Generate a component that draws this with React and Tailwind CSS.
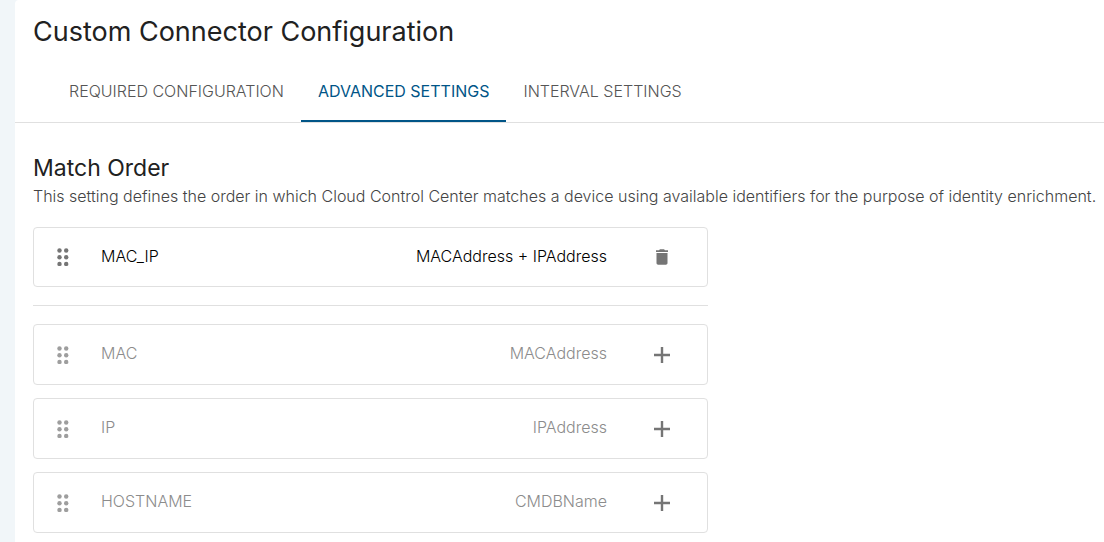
const available = [
  { name: "MAC", fields: "MACAddress" },
  { name: "IP", fields: "IPAddress" },
  { name: "HOSTNAME", fields: "CMDBName" },
];

const tabs = ["Required configuration", "Advanced settings", "Interval settings"];

function DragIcon() {
  return (
    <svg viewBox="0 0 12 18" className="h-[18px] w-3 shrink-0 fill-current" aria-hidden="true">
      {[2.5, 9.2, 15.9].map((y) => [2.5, 9.2].map((x) => <circle key={`${x}-${y}`} cx={x} cy={y} r="2.2" />))}
    </svg>
  );
}

function TrashIcon() {
  return (
    <svg viewBox="0 0 24 24" className="size-5 fill-current" aria-hidden="true">
      <path d="M5.4 19.2c0 1.1.9 2 2 2h9.2c1.1 0 2-.9 2-2V7.2H5.4v12zM19.2 3.8h-3.7l-1-1.2h-5l-1 1.2H4.8v2.2h14.4V3.8z" />
    </svg>
  );
}

function PlusIcon() {
  return (
    <svg viewBox="0 0 24 24" className="size-6 fill-current" aria-hidden="true">
      <path d="M20 13.2h-6.8V20h-2.4v-6.8H4v-2.4h6.8V4h2.4v6.8H20v2.4z" />
    </svg>
  );
}

function MatchRow({ name, fields, selected }) {
  return (
    <li
      className={`flex items-center rounded border border-[#e0e0e0] pr-8 pl-[23px] font-light ${
        selected ? "h-[60px] text-black" : "h-[61px] text-[#8c8c8c]"
      }`}
    >
      <button type="button" aria-label={`Reorder ${name}`} className={selected ? "text-[#757575]" : "text-[#9e9e9e]"}>
        <DragIcon />
      </button>
      <span className={`ml-8 flex-1 ${selected ? "pb-[2px]" : "pb-[3px]"}`}>{name}</span>
      <span className={selected ? "pb-[2px]" : "pb-[3px]"}>{fields}</span>
      <button
        type="button"
        aria-label={`${selected ? "Remove" : "Add"} ${name}`}
        className="ml-[42px] flex size-[26px] items-center justify-center text-[#757575]"
      >
        {selected ? <TrashIcon /> : <PlusIcon />}
      </button>
    </li>
  );
}

export default function App() {
  return (
    <div className="min-h-screen bg-[#f1f6f9] pl-[15px] font-['Inter',sans-serif] text-base text-[#212121]">
      <main className="min-h-screen rounded-tl bg-white pb-2">
        <h1 className="px-[18px] pt-3 text-[27px] leading-10">Custom Connector Configuration</h1>
        <div role="tablist" className="mt-2 flex border-b border-[#e0e0e0] px-[37px]">
          {tabs.map((tab, i) => (
            <button
              key={tab}
              type="button"
              role="tab"
              aria-selected={i === 1}
              className={`h-[62px] border-b-2 px-[17px] pt-[2px] uppercase ${
                i === 1 ? "border-[#005587] font-normal text-[#005587]" : "border-transparent font-[350] text-[#555]"
              }`}
            >
              {tab}
            </button>
          ))}
        </div>
        <section className="pt-[29px] pl-[18px]">
          <h2 className="text-[23px] leading-8">Match Order</h2>
          <p className="font-light text-[#444]">
            This setting defines the order in which Cloud Control Center matches a device using available identifiers for
            the purpose of identity enrichment.
          </p>
          <div className="mt-[19px] max-w-[675px]">
            <ul>
              <MatchRow name="MAC_IP" fields="MACAddress + IPAddress" selected />
            </ul>
            <hr className="my-[18px] border-[#e0e0e0]" />
            <ul className="flex flex-col gap-[13px]">
              {available.map((row) => (
                <MatchRow key={row.name} {...row} />
              ))}
            </ul>
          </div>
        </section>
      </main>
    </div>
  );
}
